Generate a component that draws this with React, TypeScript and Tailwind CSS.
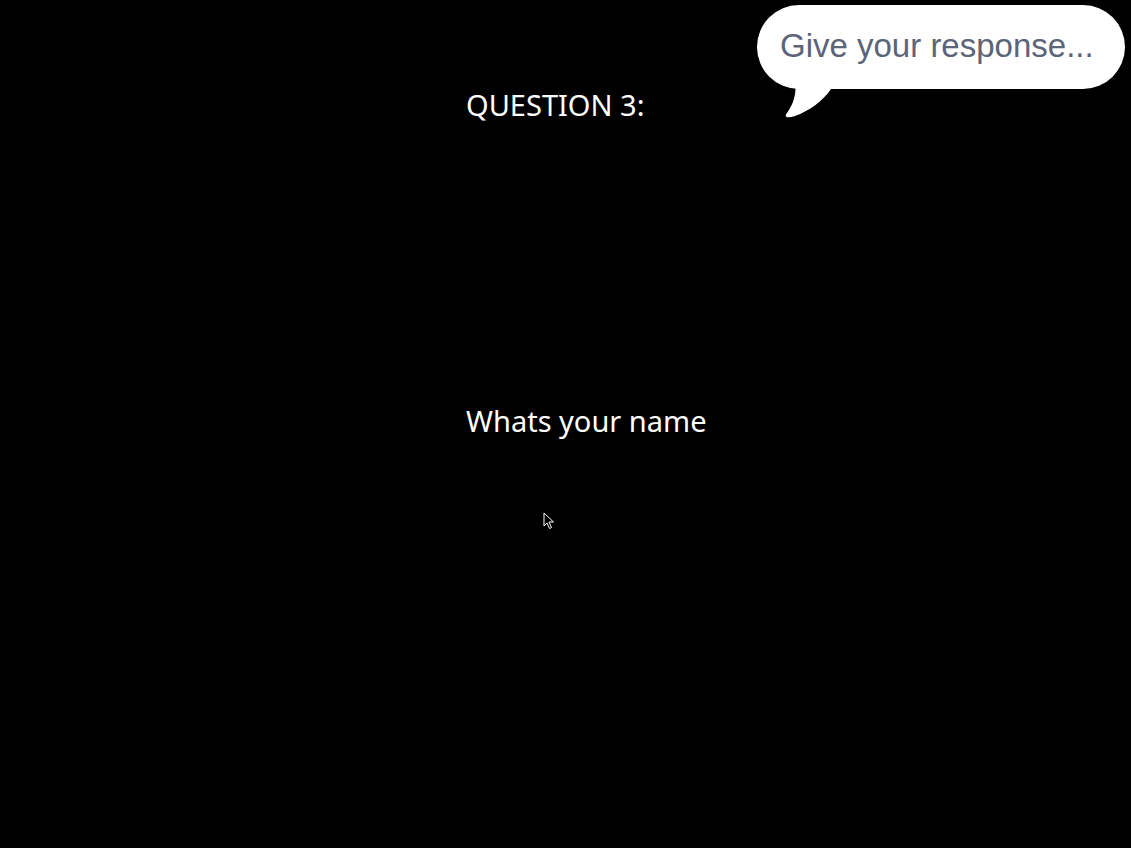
import React from "react";

const SpeechBubble = ({ text }: { text: string }) => {
  return (
    <div className="absolute right-[6px] top-[5px]">
      <div className="relative z-10 flex h-[84px] w-[368px] items-center rounded-[42px] bg-white pb-[4px] pl-[23px]">
        <span
          className="text-[33px] leading-none text-[#5c6479]"
          style={{ fontFamily: '"Liberation Sans", Arial, sans-serif' }}
        >
          {text}
        </span>
      </div>
      <svg
        className="absolute left-[26px] top-[78px]"
        width="52"
        height="36"
        viewBox="0 0 52 36"
      >
        <path
          d="M12 0 C14 10 10 22 4 30 C0 35 6 35 12 33 C26 28 40 18 48 6 L48 0 Z"
          fill="#ffffff"
        />
      </svg>
    </div>
  );
};

const App = () => {
  return (
    <div
      className="relative h-[848px] w-full overflow-hidden bg-black text-white"
      style={{ fontFamily: '"Noto Sans", "Open Sans", sans-serif' }}
    >
      <div className="flex flex-col pl-[466px] pt-[84px]">
        <h2 className="text-[29px] leading-[42px] font-normal">QUESTION 3:</h2>
        <p className="mt-[274px] text-[29px] leading-[42px]">Whats your name</p>
      </div>

      <SpeechBubble text="Give your response..." />

      {/* mouse pointer */}
      <svg
        className="absolute left-[543px] top-[512px]"
        width="12"
        height="18"
        viewBox="0 0 12 18"
      >
        <path
          d="M1 1 L1 14 L4 11 L6.5 16.5 L8.5 15.5 L6 10 L10.5 10 Z"
          fill="#000000"
          stroke="#ffffff"
          strokeWidth="1"
        />
      </svg>
    </div>
  );
};

export default App;
